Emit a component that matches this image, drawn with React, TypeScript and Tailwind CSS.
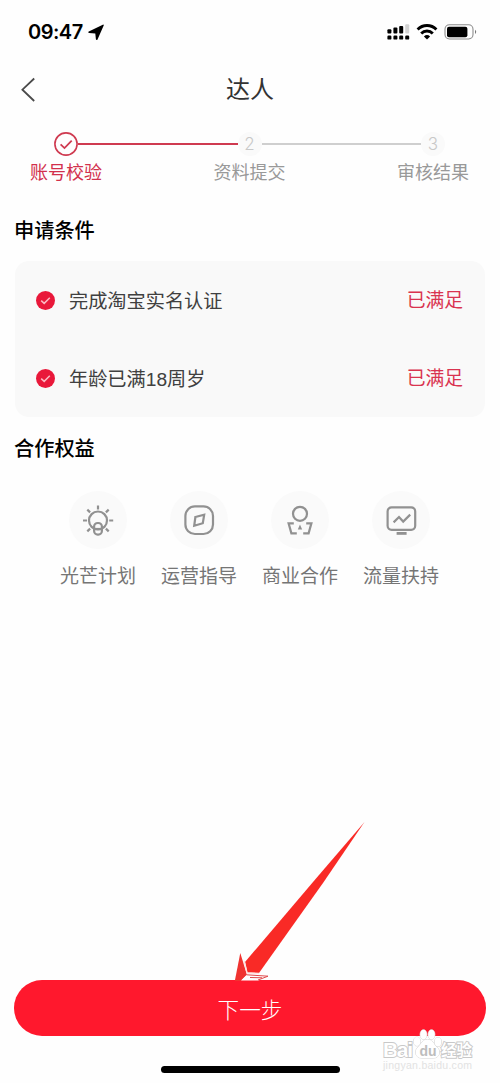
import React, { FC, ReactNode } from "react";

const steps = [
  { label: "账号校验", color: "text-[#d2304c]" },
  { label: "资料提交", color: "text-[#999999]" },
  { label: "审核结果", color: "text-[#999999]" },
];

const conditions = ["完成淘宝实名认证", "年龄已满18周岁"];

const StatusBar = () => (
  <div className="h-16 pl-7 pr-[23px] flex items-center justify-between text-black">
    <div className="flex items-center gap-[5px]">
      <span className="font-['Inter'] text-[20px] leading-none font-semibold tracking-[-0.5px]">
        09:47
      </span>
      <svg width="16" height="16" viewBox="0 0 16 16" fill="currentColor">
        <path d="M14.8.7.8 7.4c-.8.4-.6 1.5.3 1.6l6.2.5.6 5.7c.1.9 1.3 1 1.6.2l6.2-13.8c.3-.7-.2-1.2-.9-.9z" />
      </svg>
    </div>
    <div className="flex items-center">
      <svg width="24" height="16" viewBox="0 0 24 16" fill="currentColor">
        <rect x="0.4" y="5.2" width="4" height="4.2" rx="1" />
        <rect x="6.4" y="3.6" width="4" height="5.8" rx="1" />
        <rect x="12.2" y="2" width="4" height="7.4" rx="1" />
        <rect x="18.2" y="0.2" width="4" height="9.2" rx="1" fill="#d2d2d2" />
        <rect x="0.4" y="11.6" width="4" height="4" rx="1.2" />
        <rect x="6.4" y="11.6" width="4" height="4" rx="1.2" />
        <rect x="12.2" y="11.6" width="4" height="4" rx="1.2" />
        <rect x="18.2" y="11.6" width="4" height="4" rx="1.2" />
      </svg>
      <svg
        className="ml-[5px]"
        width="22"
        height="16"
        viewBox="0 0 22 16"
        fill="none"
        stroke="currentColor"
        strokeWidth="2.9"
      >
        <path d="M1.6 5.4a13.2 13.2 0 0 1 18.8 0" />
        <path d="M5.2 9.4a8.2 8.2 0 0 1 11.6 0" />
        <path
          d="M11 15.6 7.9 12.4a4.5 4.5 0 0 1 6.2 0z"
          fill="currentColor"
          stroke="none"
        />
      </svg>
      <svg className="ml-[6px]" width="33" height="16" viewBox="0 0 33 16">
        <rect
          x="1"
          y="0.8"
          width="28"
          height="14.2"
          rx="4.4"
          fill="none"
          stroke="#8c8c8c"
          strokeWidth="1.1"
        />
        <rect x="3" y="2.8" width="20.4" height="10.4" rx="2" />
        <path d="M31 5.8c1.6.8 1.6 3.4 0 4.2z" fill="#777777" />
      </svg>
    </div>
  </div>
);

const Header = () => (
  <div className="h-[52px] px-5 grid grid-cols-[24px_1fr_24px] items-center">
    <svg
      width="16"
      height="26"
      viewBox="0 0 16 26"
      fill="none"
      stroke="#4a4a4a"
      strokeWidth="1.8"
    >
      <path d="M14.2 1.5 2.4 12.7 14.2 24" />
    </svg>
    <h1 className="pb-1 text-center text-[24px] leading-none text-[#333333]">
      达人
    </h1>
  </div>
);

const StepCircle: FC<{ children: ReactNode }> = ({ children }) => (
  <div className="w-6 h-6 rounded-full bg-[#fafafa] flex items-center justify-center font-['Inter'] font-light text-[17px] leading-none text-[#c8c8c8]">
    {children}
  </div>
);

const Steps = () => (
  <div className="pt-4">
    <div className="h-6 pl-[54px] pr-[55px] flex items-center">
      <svg
        width="24"
        height="24"
        viewBox="0 0 24 24"
        fill="none"
        stroke="#cf3a50"
        strokeWidth="1.6"
      >
        <circle cx="12" cy="12" r="11.1" />
        <path d="m6.6 12.4 3.9 3.7 7.2-7.4" strokeWidth="1.8" />
      </svg>
      <div className="flex-1 h-[2px] bg-[#cf3a50]" />
      <StepCircle>2</StepCircle>
      <div className="flex-1 h-[2px] bg-[#cfcfcf]" />
      <StepCircle>3</StepCircle>
    </div>
    <div className="h-[30px] pl-[30px] pr-[31px] flex items-center justify-between">
      {steps.map((step) => (
        <span
          key={step.label}
          className={`text-[18px] leading-none ${step.color}`}
        >
          {step.label}
        </span>
      ))}
    </div>
  </div>
);

const Conditions = () => (
  <div className="mx-[15px] rounded-[14px] bg-[#f9f9f9]">
    {conditions.map((item) => (
      <div
        key={item}
        className="h-[78px] pl-[21px] pr-[22px] flex items-center text-[19.2px] leading-none"
      >
        <svg width="19" height="19" viewBox="0 0 19 19" fill="none">
          <circle cx="9.5" cy="9.5" r="9.5" fill="#e9183a" />
          <path d="m5.2 9.6 3 2.8 5.6-5.6" stroke="#fbb9c2" strokeWidth="1.5" />
        </svg>
        <span className="pt-[3px] ml-[14px] flex-1 font-['Liberation_Sans','Noto_Sans_CJK_SC',sans-serif] text-[#404040]">
          {item}
        </span>
        <span className="pb-px text-[18.8px] text-[#d93450]">已满足</span>
      </div>
    ))}
  </div>
);

const Benefit: FC<{ label: string; children: ReactNode }> = ({
  label,
  children,
}) => (
  <div className="w-[101px] flex flex-col items-center">
    <div className="w-[58px] h-[58px] rounded-full bg-[#fafafa] flex items-center justify-center">
      <svg
        width="32"
        height="32"
        viewBox="0 0 32 32"
        fill="none"
        stroke="#919191"
        strokeWidth="2.2"
      >
        {children}
      </svg>
    </div>
    <span className="mt-4 text-[19px] leading-5 text-[#757575]">{label}</span>
  </div>
);

const Benefits = () => (
  <div className="pt-[29px] pl-[47.6px] flex">
    <Benefit label="光芒计划">
      <circle cx="16" cy="16.5" r="9" />
      <path d="M16 1.6v4M1 16.5h4M27.2 16.5h4M5.3 5.6l2.8 2.8M26.7 5.6l-2.8 2.8M5.3 27.4l2.8-2.8M26.7 27.4l-2.8-2.8" />
      <rect x="12.1" y="19" width="7.8" height="11.6" rx="3.6" />
      <path d="M12.1 25h7.8" />
    </Benefit>
    <Benefit label="运营指导">
      <rect x="2.4" y="2.4" width="27.6" height="27.6" rx="9.5" />
      <path d="m12.4 13 8.8-2.2-1.4 8.4-8.6 2.6z" />
    </Benefit>
    <Benefit label="商业合作">
      <circle cx="16" cy="9.8" r="7" />
      <path d="M9.8 19.4H4.6l2.8 10h5.4M22.2 19.4h5.2l-2.8 10h-5.4" />
      <path d="m16 20.5 2.2 5h-4.4z" fill="#919191" stroke="none" />
    </Benefit>
    <Benefit label="流量扶持">
      <rect x="2.6" y="3.4" width="27.6" height="22.4" rx="4" />
      <path d="m8.6 18.4 5.4-5.4 4.2 4.6 7-7" />
      <path d="M11.6 29.4h10" strokeWidth="2.8" />
    </Benefit>
  </div>
);

const PointerArrow = () => (
  <svg
    className="absolute left-[230px] top-[818px]"
    width="140"
    height="166"
    viewBox="0 0 140 166"
  >
    <path d="M134.5 4 86 60.500 15 144l2.500 11H29L93 65z" fill="#f92a26" />
    <path d="M10.3 135 4.8 163h6L17 157z" fill="#f03330" />
    <path d="m17 156.5 21.500 1.500-10 4.500H11z" fill="#ffffff" />
    <path
      d="m16.500 156.800 21.500 1.400-10 3.800M20 159.500l12 .3"
      fill="none"
      stroke="#e0484a"
      strokeWidth="1"
    />
    <path
      d="m14.2 143 2.800 11.800 12 .6"
      fill="none"
      stroke="#ffe3e0"
      strokeWidth="1.4"
    />
  </svg>
);

const Watermark = () => (
  <svg
    className="absolute left-[380px] top-[1028px]"
    width="96"
    height="46"
    viewBox="0 0 96 46"
    fill="#ffffff"
    stroke="#c8c8c8"
    strokeWidth="0.8"
  >
    <g fontFamily="Liberation Sans" fontWeight="700" paintOrder="stroke">
      <text x="3" y="29" fontSize="21" textLength="30" strokeWidth="1.8">
        Bai
      </text>
      <g stroke="#d2d2d2" strokeWidth="1">
        <path d="M47.5 11.500c5 0 6 4.500 9.500 7.500 4 3.500 3 11-3.500 11h-12c-6.500 0-7.500-7.500-3.500-11 3.500-3 4.500-7.500 9.500-7.500z" />
        <ellipse cx="37" cy="13.5" rx="3.3" ry="4.4" />
        <ellipse cx="43.5" cy="6.5" rx="3.4" ry="4.8" />
        <ellipse cx="51.5" cy="6.5" rx="3.4" ry="4.8" />
        <ellipse cx="58" cy="14" rx="3.3" ry="4.4" />
      </g>
      <text x="39.500" y="27.500" fontSize="14" fill="#bdbdbd" stroke="none">
        du
      </text>
      <text
        x="61"
        y="27.5"
        fontSize="15.5"
        fontFamily="Noto Sans CJK SC"
        strokeWidth="1.8"
      >
        经验
      </text>
    </g>
    <text
      x="3"
      y="41"
      fontSize="10.5"
      fontFamily="Liberation Sans"
      textLength="89"
      fill="#e2e2e2"
      stroke="none"
    >
      jingyan.baidu.com
    </text>
  </svg>
);

const App = () => (
  <div className="relative w-[500px] h-[1083px] overflow-hidden bg-[#fefefe] flex flex-col font-['Noto_Sans_CJK_SC',sans-serif]">
    <StatusBar />
    <Header />
    <Steps />
    <h2 className="h-[75px] pt-[30px] pl-[14px] text-[20.2px] leading-7 font-medium text-black">
      申请条件
    </h2>
    <Conditions />
    <h2 className="pt-[17px] pl-[14px] text-[20.2px] leading-7 font-medium text-black">
      合作权益
    </h2>
    <Benefits />
    <div className="mt-auto px-[14px] pb-[10px] flex flex-col items-center">
      <button className="w-full h-14 rounded-full bg-[#ff182d] pt-0.5 text-[21.6px] leading-none font-light text-white">
        下一步
      </button>
      <div className="mt-[30px] w-[179px] h-[7px] rounded-full bg-black" />
    </div>
    <PointerArrow />
    <Watermark />
  </div>
);

export default App;
